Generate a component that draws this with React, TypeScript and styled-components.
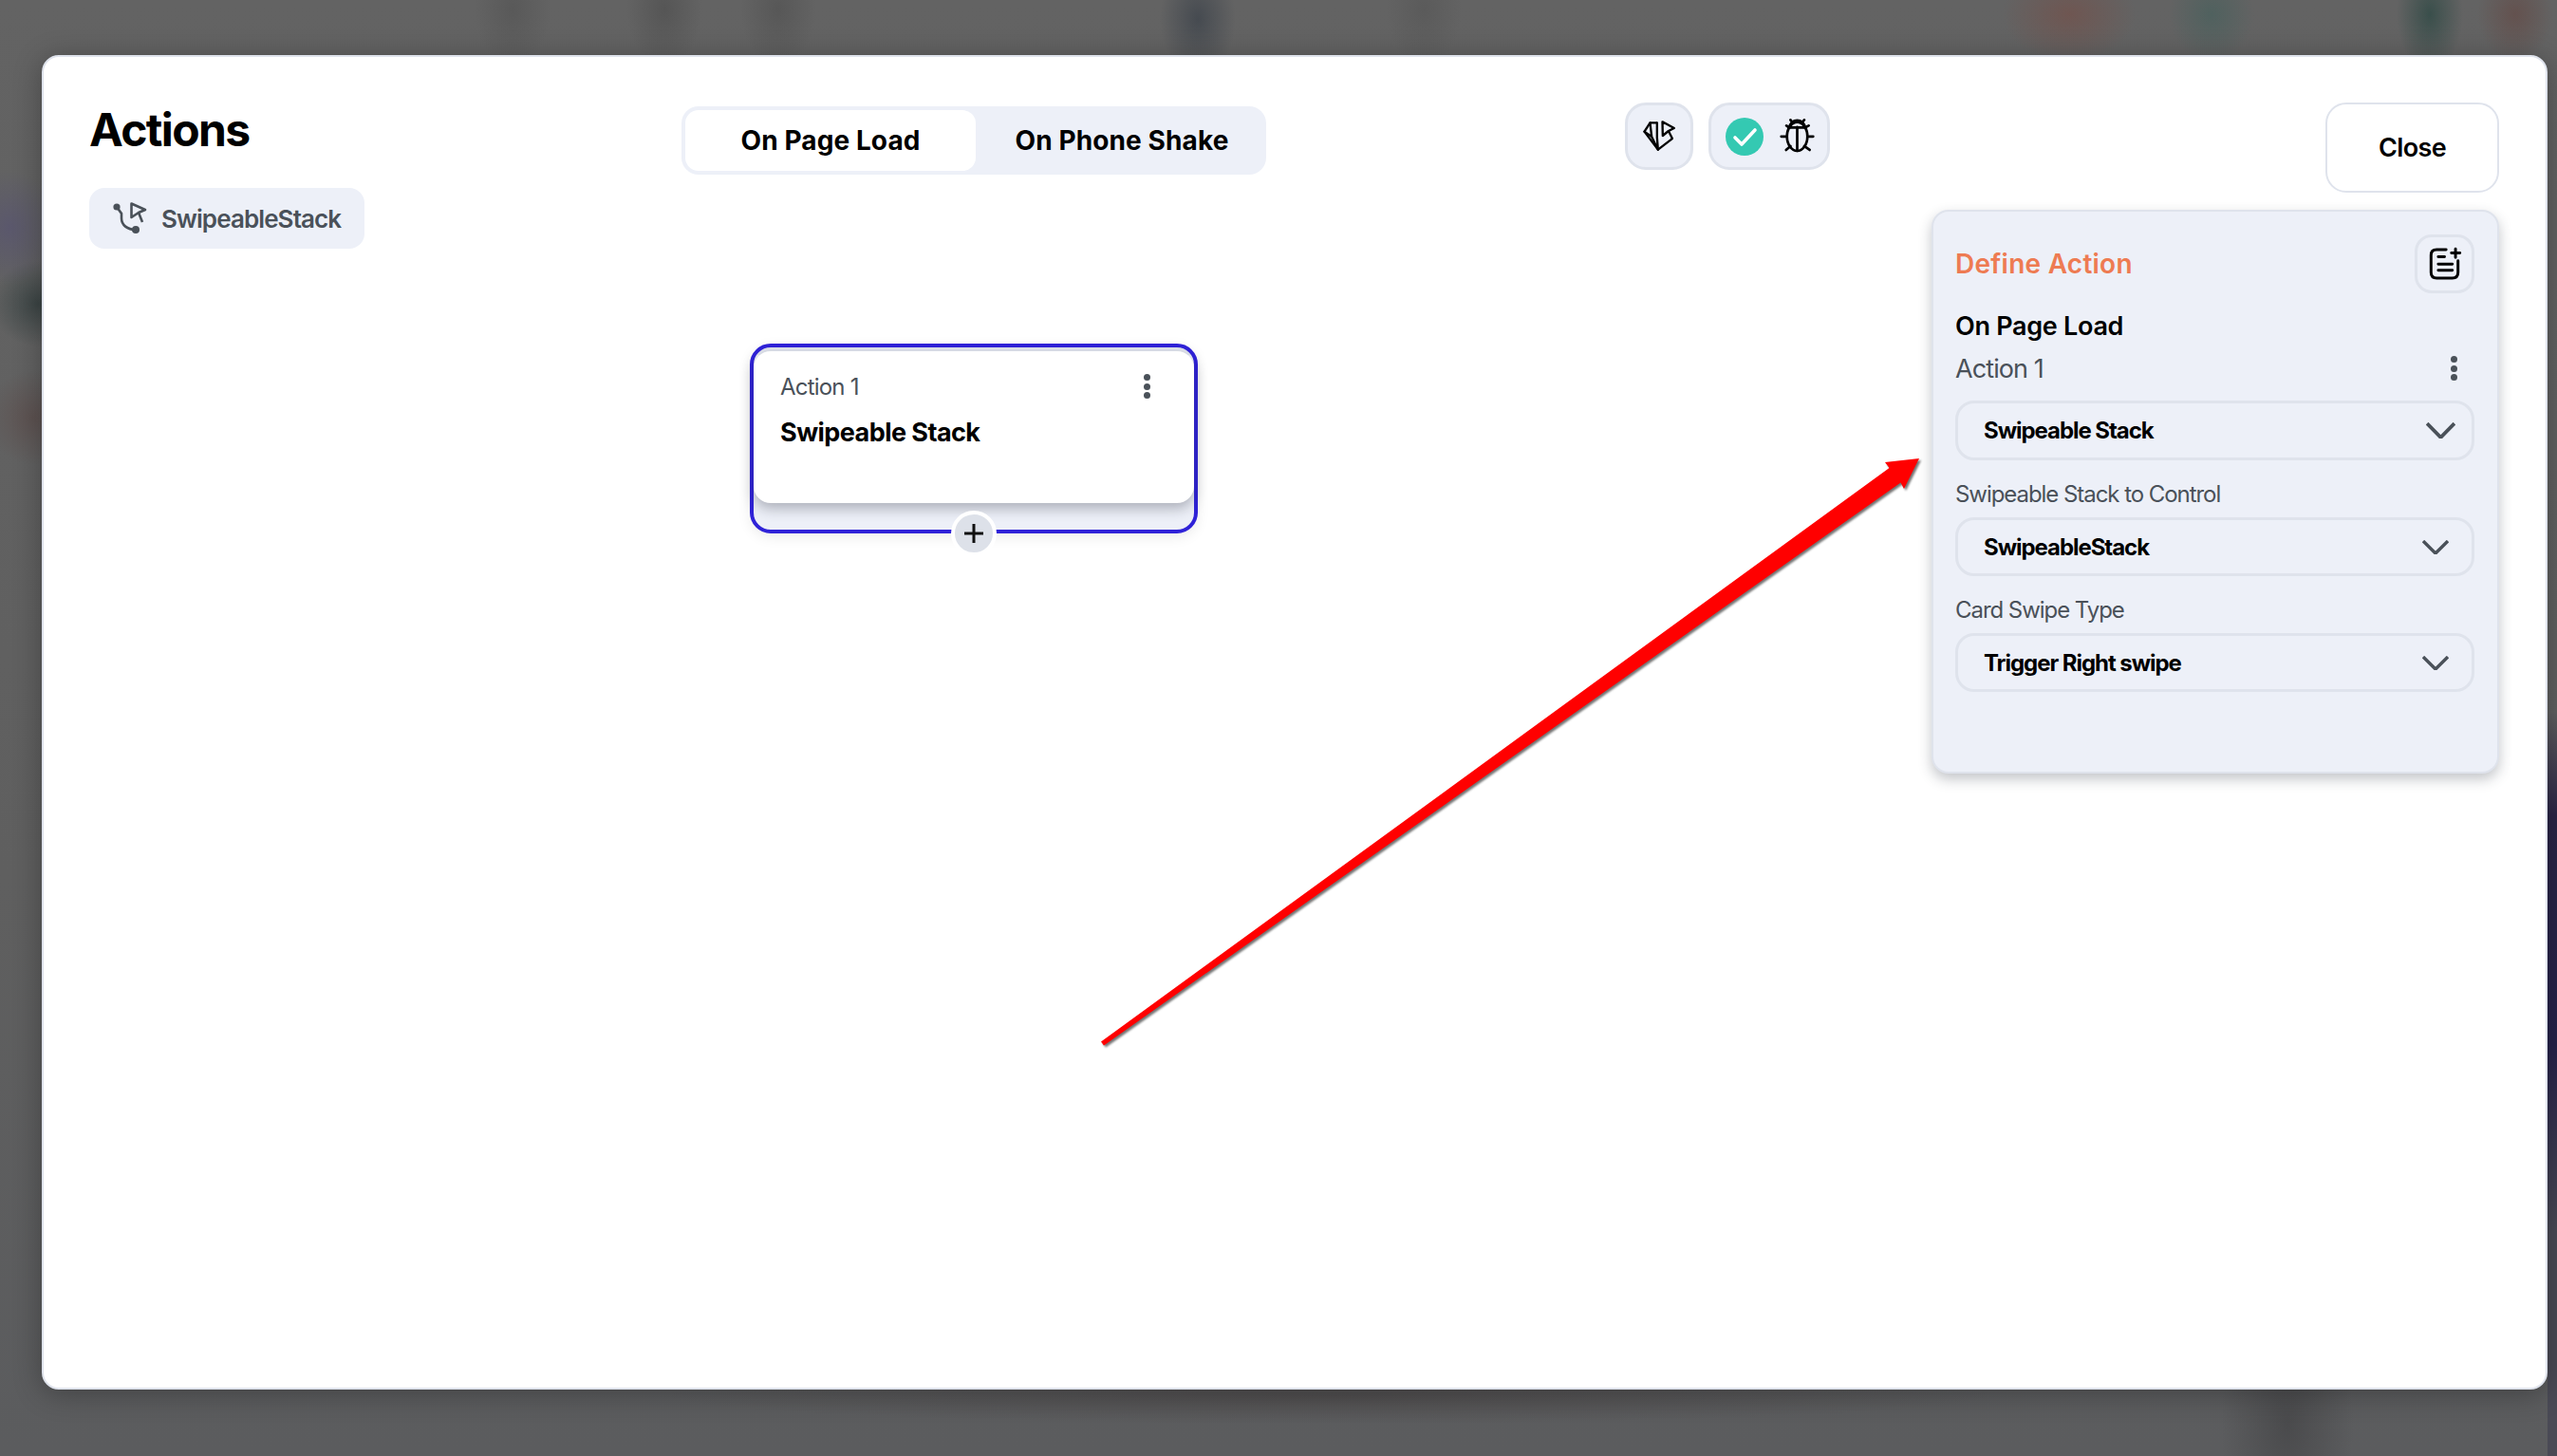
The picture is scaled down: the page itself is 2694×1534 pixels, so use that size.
import React from 'react';
import styled, { createGlobalStyle } from 'styled-components';

const theme = {
  panel: '#edf0f8',
  line: '#dfe3ec',
  textDark: '#000000',
  textMuted: '#4a5159',
  accent: '#ee7b52',
  focus: '#2f22d8',
  teal: '#34c9b2',
};

const GlobalStyle = createGlobalStyle`
  html, body {
    margin: 0;
    padding: 0;
    overflow: hidden;
  }
  * {
    box-sizing: border-box;
  }
  body {
    font-family: Inter, 'Liberation Sans', sans-serif;
    color: ${theme.textDark};
  }
`;

// Blurred app behind the modal, only a few colour smears are visible
const Backdrop = styled.div`
  display: flex;
  width: 2694px;
  height: 1534px;
  padding: 58px 10px 70px 44px;
  background:
    radial-gradient(ellipse 40px 60px at 1262px 20px, rgba(50, 58, 68, 0.6), transparent),
    radial-gradient(ellipse 70px 50px at 2180px 15px, rgba(125, 70, 60, 0.45), transparent),
    radial-gradient(ellipse 45px 50px at 2330px 15px, rgba(60, 95, 90, 0.5), transparent),
    radial-gradient(ellipse 35px 60px at 2560px 15px, rgba(40, 70, 65, 0.7), transparent),
    radial-gradient(ellipse 40px 50px at 2650px 15px, rgba(100, 70, 65, 0.6), transparent),
    radial-gradient(ellipse 40px 60px at 540px 10px, rgba(70, 70, 70, 0.35), transparent),
    radial-gradient(ellipse 40px 60px at 700px 10px, rgba(65, 65, 65, 0.4), transparent),
    radial-gradient(ellipse 40px 60px at 820px 10px, rgba(65, 65, 65, 0.35), transparent),
    radial-gradient(ellipse 40px 60px at 1500px 10px, rgba(75, 75, 75, 0.35), transparent),
    radial-gradient(ellipse 50px 60px at 10px 240px, rgba(85, 80, 115, 0.6), transparent),
    radial-gradient(ellipse 50px 45px at 40px 320px, rgba(45, 58, 58, 0.7), transparent),
    radial-gradient(ellipse 50px 50px at 35px 440px, rgba(90, 70, 68, 0.55), transparent),
    radial-gradient(ellipse 70px 130px at 2410px 1500px, rgba(60, 60, 62, 0.55), transparent),
    radial-gradient(ellipse 700px 30px at 1400px 1470px, rgba(70, 65, 65, 0.5), transparent),
    linear-gradient(180deg, transparent 0, transparent 750px, #2a2546 860px, #26224a 1100px, #4a4a55 1300px) right / 10px 100% no-repeat,
    linear-gradient(180deg, #636363 0%, #5f5f5f 60%, #5b5c5e 100%);
`;

const Modal = styled.div`
  position: relative;
  flex: 1;
  display: flex;
  padding: 48px 48px 0 48px;
  background: #ffffff;
  border: 2px solid ${theme.line};
  border-radius: 18px;
  box-shadow: 0 4px 30px rgba(0, 0, 0, 0.3);
`;

const LeftColumn = styled.div`
  width: 624px;
  display: flex;
  flex-direction: column;
  align-items: flex-start;
`;

const Title = styled.h1`
  margin: 0;
  padding-top: 1px;
  font-size: 48px;
  line-height: 56px;
  font-weight: 700;
  letter-spacing: -1.6px;
`;

const SourceChip = styled.div`
  display: flex;
  align-items: center;
  gap: 14px;
  width: 290px;
  height: 64px;
  margin-top: 33px;
  padding-left: 22px;
  background: ${theme.panel};
  border-radius: 16px;
  color: ${theme.textMuted};
  font-size: 26px;
  font-weight: 600;
  letter-spacing: -0.9px;
`;

const CenterColumn = styled.div`
  width: 1317px;
  display: flex;
  flex-direction: column;
`;

const TopRow = styled.div`
  display: flex;
  align-items: flex-start;
`;

const Tabs = styled.div`
  display: flex;
  width: 616px;
  height: 72px;
  margin-top: 4px;
  padding: 4px;
  background: ${theme.panel};
  border-radius: 18px;
`;

const Tab = styled.div<{ $active?: boolean }>`
  display: flex;
  align-items: center;
  justify-content: center;
  width: ${(p) => (p.$active ? '306px' : '302px')};
  padding-left: ${(p) => (p.$active ? '0' : '6px')};
  background: ${(p) => (p.$active ? '#ffffff' : 'transparent')};
  border-radius: 14px;
  font-size: 28px;
  font-weight: 700;
  letter-spacing: 0.1px;
`;

const IconGroup = styled.div`
  display: flex;
  gap: 16px;
  margin-left: 378px;
`;

const IconButton = styled.div<{ $wide?: boolean }>`
  display: flex;
  align-items: center;
  justify-content: center;
  gap: 17px;
  width: ${(p) => (p.$wide ? '128px' : '72px')};
  height: 71px;
  padding-left: ${(p) => (p.$wide ? '1px' : '0')};
  background: ${theme.panel};
  border: 3px solid ${theme.line};
  border-radius: 22px;
`;

const Canvas = styled.div`
  padding: 178px 0 0 72px;
`;

const FlowNode = styled.div`
  position: relative;
  width: 472px;
  height: 200px;
  padding-top: 4px;
  background: ${theme.panel};
  border: 4px solid ${theme.focus};
  border-radius: 22px;
  box-shadow: 0 4px 14px rgba(0, 0, 0, 0.08);
  background-image: linear-gradient(${theme.line}, ${theme.line});
  background-size: 100% 8px;
  background-repeat: no-repeat;
`;

const NodeCard = styled.div`
  height: 160px;
  padding: 22px 46px 0 28px;
  background: #ffffff;
  border-radius: 18px;
  box-shadow: 0 6px 14px rgba(40, 45, 60, 0.32);
`;

const NodeHeader = styled.div`
  display: flex;
  align-items: center;
  justify-content: space-between;
  height: 30px;
  color: ${theme.textMuted};
  font-size: 24px;
  letter-spacing: -0.8px;
`;

const NodeName = styled.div`
  margin-top: 17px;
  font-size: 27px;
  line-height: 34px;
  font-weight: 700;
  letter-spacing: -0.55px;
`;

const DotsColumn = styled.div`
  display: flex;
  flex-direction: column;
  gap: 2.5px;
`;

const Dot = styled.span`
  width: 7px;
  height: 7px;
  border-radius: 50%;
  background: ${theme.textMuted};
`;

const AddStep = styled.div`
  position: absolute;
  left: 50%;
  bottom: -28px;
  display: flex;
  align-items: center;
  justify-content: center;
  width: 48px;
  height: 48px;
  margin-left: -24px;
  background: #dde1e9;
  border: 4px solid #ffffff;
  border-radius: 50%;
`;

const RightColumn = styled.div`
  width: 598px;
  display: flex;
  flex-direction: column;
  align-items: flex-end;
`;

const CloseButton = styled.div`
  display: flex;
  align-items: center;
  justify-content: center;
  width: 183px;
  height: 95px;
  background: #ffffff;
  border: 2.5px solid ${theme.line};
  border-radius: 22px;
  font-size: 27px;
  font-weight: 600;
  letter-spacing: -0.6px;
`;

const Panel = styled.div`
  width: 598px;
  height: 594px;
  margin-top: 18px;
  padding: 24px 24px 0 23px;
  background: ${theme.panel};
  border: 2px solid ${theme.line};
  border-radius: 18px;
  box-shadow: 0 6px 14px rgba(40, 45, 60, 0.28);
`;

const PanelHeader = styled.div`
  display: flex;
  align-items: center;
  justify-content: space-between;
  height: 62px;
`;

const PanelTitle = styled.div`
  color: ${theme.accent};
  font-size: 28px;
  font-weight: 600;
  letter-spacing: 0.25px;
`;

const NoteButton = styled.div`
  display: flex;
  align-items: center;
  justify-content: center;
  width: 63px;
  height: 62px;
  border: 3px solid ${theme.line};
  border-radius: 18px;
`;

const TriggerName = styled.div`
  margin-top: 18px;
  font-size: 27px;
  line-height: 34px;
  font-weight: 600;
  letter-spacing: -0.3px;
`;

const ActionRow = styled.div`
  display: flex;
  align-items: center;
  justify-content: space-between;
  height: 34px;
  margin-top: 10px;
  padding-right: 18px;
  color: ${theme.textMuted};
  font-size: 27px;
  letter-spacing: -0.9px;
`;

const FieldLabel = styled.div`
  margin-top: 22px;
  color: ${theme.textMuted};
  font-size: 24px;
  line-height: 28px;
  letter-spacing: -1.05px;
`;

const Select = styled.div<{ $first?: boolean }>`
  display: flex;
  align-items: center;
  justify-content: space-between;
  height: ${(p) => (p.$first ? '63px' : '62px')};
  margin-top: ${(p) => (p.$first ? '17px' : '10px')};
  padding: 0 ${(p) => (p.$first ? '17px' : '24px')} 0 27px;
  border: 3px solid ${theme.line};
  border-radius: 20px;
  font-size: 24px;
  font-weight: 700;
  letter-spacing: -1.05px;
`;

const ChevronIcon = styled.svg<{ $large?: boolean }>`
  width: ${(p) => (p.$large ? '31px' : '28px')};
  height: ${(p) => (p.$large ? '17px' : '15px')};
  fill: none;
  stroke: ${theme.textMuted};
  stroke-width: 3.4;
`;

const ArrowLayer = styled.svg`
  position: absolute;
  left: -46px;
  top: -60px;
  width: 2694px;
  height: 1534px;
  pointer-events: none;
  filter: drop-shadow(2px 2px 1px rgba(70, 70, 70, 0.75));
`;

const Chevron = ({ large }: { large?: boolean }) => (
  <ChevronIcon $large={large} viewBox="0 0 28 15" preserveAspectRatio="none">
    <polyline points="1,1 14,14 27,1" />
  </ChevronIcon>
);

const Dots = () => (
  <DotsColumn>
    <Dot />
    <Dot />
    <Dot />
  </DotsColumn>
);

const SourceIcon = () => (
  <svg width="40" height="40" viewBox="0 0 40 40" fill="none" stroke={theme.textMuted} strokeWidth="2.6">
    <circle cx="7" cy="8" r="3.6" fill={theme.textMuted} stroke="none" />
    <circle cx="27" cy="32" r="4" fill={theme.textMuted} stroke="none" />
    <path d="M7 8 L12 15 V20 C12 27 18 32 27 32" />
    <path d="M22.5 4.5 L37 11 L30 14 L22.5 19 Z M30 14 L34 24" strokeLinejoin="round" />
  </svg>
);

const GemCursorIcon = () => (
  <svg width="37" height="35" viewBox="120 143 110 105" fill="none" stroke="#000" strokeWidth="7" strokeLinejoin="round" strokeLinecap="round">
    <path d="M165 153 H145 L127 181 L170 238 L214 204" />
    <path d="M145 153 L150 197 L170 238 L167 200 V153 M127 181 L150 197" />
    <path d="M184 150 L221 170 L203 179 L185 194 Z M203 179 L215 202" />
  </svg>
);

const CheckBadge = () => (
  <svg width="40" height="40" viewBox="0 0 40 40">
    <circle cx="20" cy="20" r="20" fill={theme.teal} />
    <polyline points="10,21 17,28 31,13" fill="none" stroke="#fff" strokeWidth="3.6" strokeLinecap="round" strokeLinejoin="round" />
  </svg>
);

const BugIcon = () => (
  <svg width="37" height="37" viewBox="553 142 110 110" fill="none" stroke="#000" strokeWidth="8" strokeLinecap="round">
    <ellipse cx="608" cy="198" rx="32" ry="45" />
    <path d="M608 168 V243 M584 170 C586 140 630 140 632 170 M580 170 H636" />
    <path d="M587 146 L594 155 M630 146 L622 155 M574 164 L584 170 M644 164 L632 170" />
    <path d="M558 198 H576 M658 198 H640 M573 240 L587 228 M647 240 L630 228" />
  </svg>
);

const NotePlusIcon = () => (
  <svg width="37" height="38" viewBox="110 60 110 115" fill="none" stroke="#000" strokeWidth="9" strokeLinecap="round">
    <path d="M170 72 H140 Q122 72 122 90 V145 Q122 163 140 163 H190 Q208 163 208 145 V108" />
    <path d="M145 95 H165 M145 118 H190 M145 138 H190 M200 70 V97 M187 83 H214" />
  </svg>
);

const PlusIcon = () => (
  <svg width="22" height="22" viewBox="0 0 22 22" stroke="#111" strokeWidth="3">
    <path d="M11 1 V21 M1 11 H21" />
  </svg>
);

const App = () => (
  <>
    <GlobalStyle />
    <Backdrop>
      <Modal>
        <LeftColumn>
          <Title>Actions</Title>
          <SourceChip>
            <SourceIcon />
            SwipeableStack
          </SourceChip>
        </LeftColumn>

        <CenterColumn>
          <TopRow>
            <Tabs>
              <Tab $active>On Page Load</Tab>
              <Tab>On Phone Shake</Tab>
            </Tabs>
            <IconGroup>
              <IconButton>
                <GemCursorIcon />
              </IconButton>
              <IconButton $wide>
                <CheckBadge />
                <BugIcon />
              </IconButton>
            </IconGroup>
          </TopRow>
          <Canvas>
            <FlowNode>
              <NodeCard>
                <NodeHeader>
                  Action 1
                  <Dots />
                </NodeHeader>
                <NodeName>Swipeable Stack</NodeName>
              </NodeCard>
              <AddStep>
                <PlusIcon />
              </AddStep>
            </FlowNode>
          </Canvas>
        </CenterColumn>

        <RightColumn>
          <CloseButton>Close</CloseButton>
          <Panel>
            <PanelHeader>
              <PanelTitle>Define Action</PanelTitle>
              <NoteButton>
                <NotePlusIcon />
              </NoteButton>
            </PanelHeader>
            <TriggerName>On Page Load</TriggerName>
            <ActionRow>
              Action 1
              <Dots />
            </ActionRow>
            <Select $first>
              Swipeable Stack
              <Chevron large />
            </Select>
            <FieldLabel>Swipeable Stack to Control</FieldLabel>
            <Select>
              SwipeableStack
              <Chevron />
            </Select>
            <FieldLabel>Card Swipe Type</FieldLabel>
            <Select>
              Trigger Right swipe
              <Chevron />
            </Select>
          </Panel>
        </RightColumn>

        {/* annotation drawn over the screenshot */}
        <ArrowLayer viewBox="0 0 2694 1534">
          <polygon
            fill="#ff0000"
            points="1160,1097.5 1990.5,493 1986,487 2022,483 2006,515 2002.5,508.5 1163,1101.5"
          />
        </ArrowLayer>
      </Modal>
    </Backdrop>
  </>
);

export default App;
